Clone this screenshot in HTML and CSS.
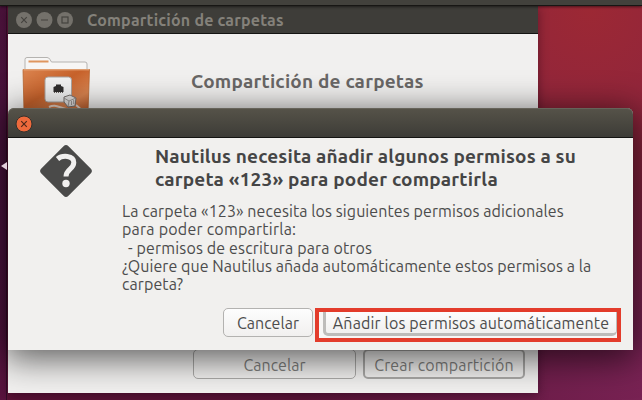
FILE: index.html
```html
<!DOCTYPE html>
<html lang="es">
<head>
<meta charset="utf-8">
<title>Compartición de carpetas</title>
<link rel="stylesheet" href="styles.css">
</head>
<body>
<div class="desktop">
  <div class="launcher-edge"></div>

  <section class="window share">
    <header class="titlebar">
      <svg class="controls" viewBox="0 0 60 18">
        <g fill="#74716b"><circle cx="9" cy="9" r="8"/><circle cx="29.5" cy="9" r="8"/><circle cx="50" cy="9" r="8"/></g>
        <g fill="none" stroke="#45433f" stroke-width="1.2"><path d="M6.2 6.2l5.6 5.6M11.8 6.2l-5.6 5.6M26 9h7"/><rect x="47" y="6" width="6" height="6"/></g>
      </svg>
      <span class="title">Compartición de carpetas</span>
    </header>
    <div class="share-body">
      <svg class="folder" viewBox="0 0 70 56">
        <defs>
          <linearGradient id="orange" x1="0" y1="0" x2="1" y2="1">
            <stop offset="0" stop-color="#dc8550"/><stop offset=".45" stop-color="#c7622b"/><stop offset=".75" stop-color="#d9834f"/><stop offset="1" stop-color="#bf5b29"/>
          </linearGradient>
        </defs>
        <path d="M4 14V3.500q0-2 2-2h20q2 0 3 2l1.500 2.500H64q2 0 2 2v6z" fill="#f7f6f5" stroke="#b5b3b0"/>
        <path d="M7.500 5.500h20" stroke="#df965f" stroke-width="2"/>
        <path d="M2 13.500h66.500L67 56H3z" fill="url(#orange)" stroke="#b7652f" stroke-width=".8"/>
        <path d="M2.500 13.800h65.500" stroke="#edb185"/>
        <rect x="24" y="21" width="26.500" height="25" rx="3" fill="#f1f1f1" stroke="#aaa5a2"/>
        <path d="M32.500 36v-5l2.500-1v-1.500h5V30l2.500 1v5z" fill="#302e2e"/>
        <path d="M33 36.500h9" stroke="#66605d" stroke-dasharray="1 1"/>
        <path d="M28 51c6-3 9 0 17 2M55 49l8 7" fill="none" stroke="#e8d5c9" stroke-width="2"/>
        <path d="M43 41l6-2 6 3-1 8-7 1-4-5z" fill="#e2e1e0" stroke="#77716e"/>
        <path d="M43 42l5 3 7-3M48 45l-1 6M50.500 45v4M52.700 44v4" fill="none" stroke="#8d8885" stroke-width=".8"/>
      </svg>
      <h1>Compartición de carpetas</h1>
      <div class="share-actions">
        <button class="btn faded cancel">Cancelar</button>
        <button class="btn faded create">Crear compartición</button>
      </div>
    </div>
  </section>

  <div class="panel"></div>

  <section class="window dialog">
    <header class="titlebar">
      <svg class="close" viewBox="0 0 18 18"><circle cx="9" cy="9" r="8" fill="#ee6a3c" stroke="#35312c"/><path d="M6.200 6.200l5.600 5.600M11.800 6.200l-5.600 5.600" stroke="#50291a" stroke-width="1.200"/></svg>
    </header>
    <div class="dialog-body">
      <svg class="question" viewBox="0 0 52 52">
        <rect x="6.800" y="6.800" width="38.400" height="38.400" rx="3.500" transform="rotate(45 26 26)" fill="#4a4a49"/>
        <path d="M17.500 14c4.500-3.900 16.300-4 16.300 3.500 0 6.800-7.800 6.500-7.800 14" fill="none" stroke="#f1f0ef" stroke-width="5"/>
        <circle cx="26" cy="38.500" r="3.700" fill="#f1f0ef"/>
      </svg>
      <div class="message">
        <h2><span class="h-a">Nautilus necesita añadir algunos permisos a su</span><span class="h-b">carpeta «123» para poder compartirla</span></h2>
        <p><span class="p-a">La carpeta «123» necesita los siguientes permisos adicionales</span><span class="p-b">para poder compartirla:</span><span class="p-c">- permisos de escritura para otros</span><span class="p-d">¿Quiere que Nautilus añada automáticamente estos permisos a la</span><span class="p-e">carpeta?</span></p>
      </div>
    </div>
    <footer class="dialog-actions">
      <button class="btn">Cancelar</button>
      <div class="highlight"><button class="btn default">Añadir los permisos automáticamente</button></div>
    </footer>
  </section>
  <svg class="launcher-arrow" viewBox="0 0 6 8"><path d="M6 0v8L0 4z" fill="#e3cfdc"/></svg>
</div>
</body>
</html>
```

FILE: styles.css
```css
* { box-sizing: border-box; }
body { margin: 0; font-family: Ubuntu, "Noto Sans", sans-serif; color: #4c4c4c; }
h1, h2, p { margin: 0; }
.desktop {
  position: relative; width: 642px; height: 400px; overflow: hidden;
  background:
    radial-gradient(circle at 590px 10px, #9c2834 0, #93263a 90px, rgba(128,33,58,.9) 180px, transparent 330px),
    linear-gradient(90deg, #5b1337 0, #5b1639 300px, #782253 642px);
}
.launcher-edge { position: absolute; left: 0; top: 0; width: 7px; height: 400px; background: linear-gradient(#4a123a, #4c1441 60%, #5a133f); border-right: 1px solid #340c29; }
.launcher-arrow { position: absolute; left: 1px; top: 162px; width: 6px; height: 8px; }
.panel { position: absolute; left: 0; top: 0; width: 642px; height: 6px; background: #42413c; border-bottom: 1px solid #171614; box-shadow: 0 1px 3px rgba(0,0,0,.55); }

.window { position: absolute; display: flex; flex-direction: column; }
.titlebar { display: flex; align-items: center; flex: none; border-bottom: 1px solid #141412; }

.share { left: 8px; top: 5px; width: 530px; height: 388px; box-shadow: 0 3px 10px rgba(30,0,20,.45); }
.share .titlebar { height: 29px; padding: 2px 0 0 7px; background: #3e3d39; }
.controls { width: 60px; height: 18px; margin-right: 12px; }
.title { font-size: 16px; font-weight: 700; line-height: 20px; letter-spacing: .2px; color: #84817a; }
.share-body { flex: 1; display: grid; grid-template: 74px 1fr / 82px 1fr; background: #f1f0ef; }
.folder { width: 70px; height: 56px; margin: 22px 0 0 13px; }
.share h1 { padding: 35px 0 0 101px; font-size: 19px; line-height: 24px; letter-spacing: .2px; color: #696766; white-space: nowrap; }
.share-actions { grid-column: 1 / 3; display: flex; align-items: flex-end; gap: 7px; padding: 0 0 14px 185px; }

.btn {
  width: 90px; height: 29px; padding: 0; white-space: nowrap;
  font: 400 16px/20px Ubuntu, "Noto Sans", sans-serif; color: #4c4c4c;
  border: 1px solid #b3b2b0; border-radius: 5px; background: linear-gradient(#fdfdfd, #f1f0ef);
}
.btn.faded { height: 30px; padding-top: 1px; background: transparent; color: #7e7e7c; border-color: #aaa9a7; }
.btn.cancel { width: 163px; }
.btn.create { width: 162px; border: 2px solid #a9a8a6; letter-spacing: .15px; }

.dialog { left: 8px; top: 108px; width: 625px; height: 242px; border-radius: 6px 6px 0 0; background: #f1f0ee; box-shadow: 0 6px 34px 3px rgba(0,0,0,.62); }
.dialog .titlebar { height: 30px; padding-left: 7px; border-radius: 6px 6px 0 0; background: linear-gradient(#565349, #3d3c37); box-shadow: inset 0 1px #66635a; }
.close { width: 18px; height: 18px; margin-top: 2px; }
.dialog-body { flex: 1; display: flex; }
.question { width: 52px; height: 52px; margin: 7px 0 0 32px; flex: none; }
.message { padding: 7px 0 0 30px; white-space: nowrap; }
.message span { display: block; }
h2 { padding-left: 33px; font-size: 19px; line-height: 22.8px; color: #454545; }
.h-a { letter-spacing: .15px; }
.h-b { letter-spacing: .2px; }
.message p { margin-top: 11.5px; font-size: 16px; line-height: 18.33px; }
.p-a { letter-spacing: .09px; }
.p-b { letter-spacing: .23px; }
.p-c { letter-spacing: .15px; padding-left: 6px; }
.p-d { letter-spacing: .055px; }
.p-e { letter-spacing: .1px; }
.dialog-actions { display: flex; align-items: flex-start; gap: 2px; height: 34px; margin: 0 12px 8px 215px; }
.highlight { width: 306px; height: 34px; border: 4px solid #e33c2b; background: #f7f6f5; display: flex; }
.btn.default { flex: 1; height: 24px; margin: 0 0 0 4px; border-width: 0 1px 3px 3px; border-color: #bdbcba; border-radius: 0 0 5px 5px; padding-top: 1px; letter-spacing: .14px; }
```
